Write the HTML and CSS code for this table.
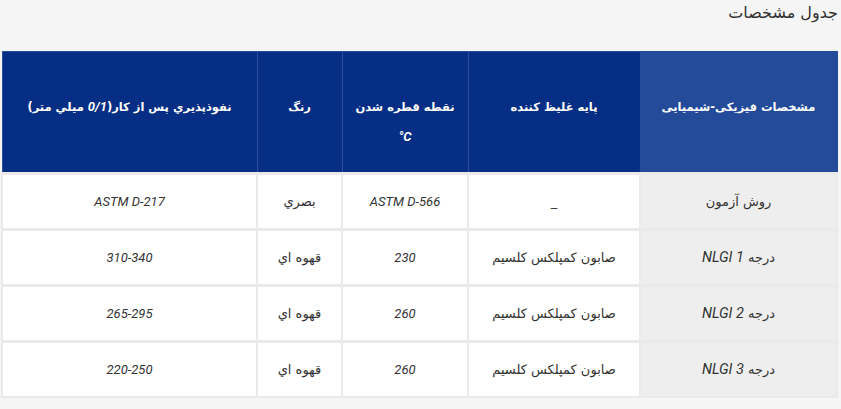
FILE: index.html
```html
<!DOCTYPE html>
<html lang="fa" dir="rtl">
<head>
<meta charset="utf-8">
<link rel="stylesheet" href="styles.css">
</head>
<body>
<div class="page">
  <h3 class="title">جدول مشخصات</h3>
  <table class="spec">
    <colgroup>
      <col class="c1"><col class="c2"><col class="c3"><col class="c4"><col class="c5">
    </colgroup>
    <thead>
      <tr>
        <th class="first">مشخصات فیزیکی-شیمیایی</th>
        <th>پایه غلیظ کننده</th>
        <th>نقطه قطره شدن<br><span class="unit" dir="ltr">°C</span></th>
        <th>رنگ</th>
        <th>نفوذپذيري پس از کار(<span class="num">0/1</span> ميلي متر)</th>
      </tr>
    </thead>
    <tbody>
      <tr>
        <td class="first">روش آزمون</td>
        <td>_</td>
        <td class="lat">ASTM D-566</td>
        <td>بصري</td>
        <td class="lat">ASTM D-217</td>
      </tr>
      <tr>
        <td class="first">درجه <span class="lat">NLGI 1</span></td>
        <td>صابون کمپلکس کلسیم</td>
        <td class="lat">230</td>
        <td>قهوه اي</td>
        <td class="lat">310-340</td>
      </tr>
      <tr>
        <td class="first">درجه <span class="lat">NLGI 2</span></td>
        <td>صابون کمپلکس کلسیم</td>
        <td class="lat">260</td>
        <td>قهوه اي</td>
        <td class="lat">265-295</td>
      </tr>
      <tr>
        <td class="first">درجه <span class="lat">NLGI 3</span></td>
        <td>صابون کمپلکس کلسیم</td>
        <td class="lat">260</td>
        <td>قهوه اي</td>
        <td class="lat">220-250</td>
      </tr>
    </tbody>
  </table>
</div>
</body>
</html>
```

FILE: styles.css
```css
html, body {
  margin: 0;
  padding: 0;
  background: #f5f5f5;
}
.page {
  padding: 3px 3px 0 3px;
  font-family: "DejaVu Sans", sans-serif;
  color: #333;
}
.title {
  margin: 0;
  font-weight: normal;
  font-size: 16px;
  line-height: 20px;
  color: #333;
  height: 48px;
}
.spec {
  width: 835px;
  border-collapse: collapse;
  table-layout: fixed;
}
.c1 { width: 197px; }
.c2 { width: 172px; }
.c3 { width: 126px; }
.c4 { width: 85px; }
.c5 { width: 255px; }
.spec th {
  background: #052e84;
  color: #fff;
  font-family: "DejaVu Sans", sans-serif;
  font-weight: bold;
  font-size: 11.5px;
  line-height: 30px;
  height: 80px;
  padding: 40px 0 0 0;
  border: 1px solid #2a4d9c;
  text-align: center;
  vertical-align: top;
}
.spec th.first {
  background: #234b9a;
  border-color: #234b9a;
}
.spec th .unit,
.spec th .num {
  font-family: Roboto, sans-serif;
  font-style: italic;
  font-size: 13px;
}
.spec td {
  background: #fff;
  height: 53px;
  padding: 0;
  border: 2px solid #eaeaea;
  border-top-width: 3px;
  text-align: center;
  vertical-align: middle;
  font-size: 13px;
  color: #333;
}
.spec td.first {
  background: #eeeeee;
}
.lat {
  font-family: Roboto, sans-serif;
  font-style: italic;
  font-size: 14.5px;
  color: #333;
}
```
